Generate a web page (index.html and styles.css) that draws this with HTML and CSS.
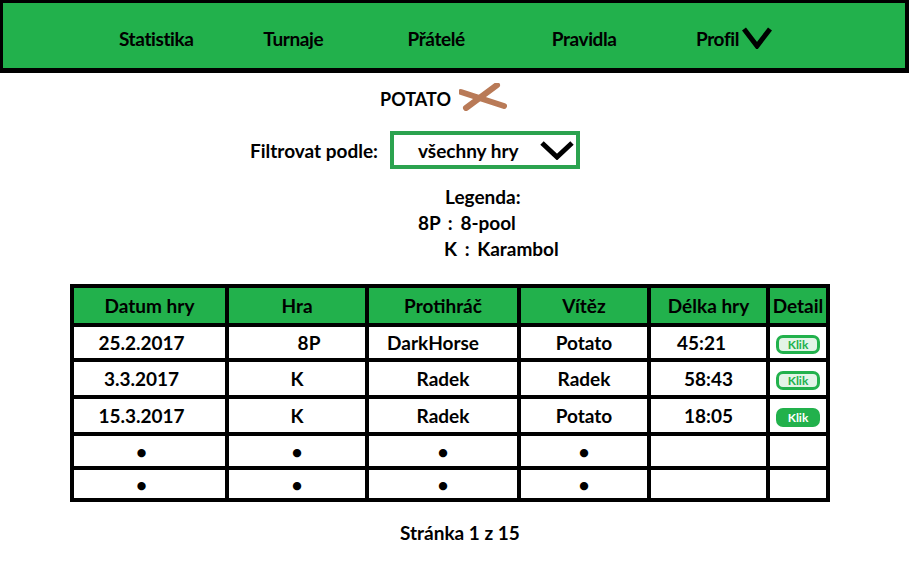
FILE: index.html
```html
<!DOCTYPE html>
<html lang="cs">
<head>
<meta charset="utf-8">
<title>Statistika</title>
<link rel="stylesheet" href="styles.css">
</head>
<body>
<header class="topbar">
  <nav class="nav">
    <a class="nav-item">Statistika</a>
    <a class="nav-item">Turnaje</a>
    <a class="nav-item">Přátelé</a>
    <a class="nav-item">Pravidla</a>
    <a class="nav-item nav-profile">Profil
      <svg class="chev-nav" width="30" height="22" viewBox="0 0 30 22"><polyline points="2,2 15,19 28,2" fill="none" stroke="#000" stroke-width="5" stroke-linejoin="miter"/></svg>
    </a>
  </nav>
</header>

<main class="content">
  <div class="player">
    <span class="player-name">POTATO</span>
    <svg class="remove" width="48" height="28" viewBox="0 0 48 28"><line x1="2" y1="9" x2="45" y2="23" stroke="#b97a57" stroke-width="6" stroke-linecap="round"/><line x1="7" y1="25" x2="38" y2="2" stroke="#b97a57" stroke-width="6" stroke-linecap="round"/></svg>
  </div>

  <div class="filter">
    <span class="filter-label">Filtrovat podle:</span>
    <div class="select">
      <span class="select-text">všechny hry</span>
      <svg class="chev-select" width="34" height="20" viewBox="0 0 34 20"><polyline points="2,3 17,17 32,3" fill="none" stroke="#000" stroke-width="5"/></svg>
    </div>
  </div>

  <div class="legend">
    <div class="legend-title">Legenda:</div>
    <div class="legend-line l1">8P : 8-pool</div>
    <div class="legend-line l2">K : Karambol</div>
  </div>

  <table class="games">
    <thead>
      <tr class="r-head">
        <th class="c1">Datum hry</th>
        <th class="c2">Hra</th>
        <th class="c3">Protihráč</th>
        <th class="c4">Vítěz</th>
        <th class="c5">Délka hry</th>
        <th class="c6">Detail</th>
      </tr>
    </thead>
    <tbody>
      <tr class="r1">
        <td class="d1">25.2.2017</td><td class="d2">8P</td><td class="d3">DarkHorse</td><td>Potato</td><td class="d5">45:21</td>
        <td><span class="klik">Klik</span></td>
      </tr>
      <tr class="r2">
        <td class="d1">3.3.2017</td><td>K</td><td>Radek</td><td>Radek</td><td>58:43</td>
        <td><span class="klik">Klik</span></td>
      </tr>
      <tr class="r3">
        <td class="d1">15.3.2017</td><td>K</td><td>Radek</td><td>Potato</td><td>18:05</td>
        <td><span class="klik klik-filled">Klik</span></td>
      </tr>
      <tr class="r4">
        <td class="d1">•</td><td>•</td><td>•</td><td>•</td><td></td><td></td>
      </tr>
      <tr class="r5">
        <td class="d1">•</td><td>•</td><td>•</td><td>•</td><td></td><td></td>
      </tr>
    </tbody>
  </table>

  <div class="pager">Stránka 1 z 15</div>
</main>
</body>
</html>
```

FILE: styles.css
```css
* { box-sizing: border-box; }

body {
  margin: 0;
  background: #fff;
  color: #000;
  font-family: Lato, "Open Sans", Arial, sans-serif;
  font-weight: 700;
}

.topbar {
  height: 73px;
  background: #22b14c;
  border-style: solid;
  border-color: #000;
  border-width: 3px 4px 5px 3px;
}

.nav {
  display: grid;
  grid-template-columns: repeat(5, 144.25px);
  align-items: center;
  height: 100%;
  padding: 6px 0 0 116px;
}

.nav-item {
  display: flex;
  align-items: center;
  font-size: 19px;
  letter-spacing: -0.4px;
  color: #000;
}

.chev-nav { margin-left: 3px; margin-top: -2px; }

.content { display: flex; flex-direction: column; }

.player {
  display: flex;
  align-items: center;
  height: 26px;
  margin-top: 13px;
  padding-left: 380px;
}
.player-name { font-size: 18px; }
.remove { margin-left: 8px; margin-top: -4px; }

.filter {
  display: flex;
  align-items: center;
  margin-top: 19px;
  padding-left: 250px;
}
.filter-label { font-size: 19px; width: 140px; }
.select {
  display: flex;
  align-items: center;
  width: 190px;
  height: 38px;
  border: 4px solid #2ba34f;
  padding-left: 24px;
}
.select-text { font-size: 19px; width: 122px; }

.legend {
  margin-top: 15px;
  padding-left: 418px;
  font-size: 19px;
}
.legend-title, .legend-line { height: 26px; line-height: 26px; }
.legend-line { word-spacing: 3px; }
.legend-title { padding-left: 27px; }
.l2 { padding-left: 26px; }

.games {
  margin: 22px 0 0 70px;
  border-collapse: separate;
  border-spacing: 0;
  table-layout: fixed;
  width: 760px;
  border-top: 4px solid #000;
  border-left: 4px solid #000;
}
.games th, .games td {
  border-right: 4px solid #000;
  border-bottom: 4px solid #000;
  text-align: center;
  vertical-align: middle;
  padding: 0;
  font-size: 19px;
}
.games th { background: #22b14c; font-weight: 700; }
.games td.d1 { padding-right: 16px; }
.games td.d2 { padding-left: 24px; }
.games td.d3 { padding-right: 20px; }
.games td.d5 { padding-right: 14px; }
.c1 { width: 155px; }
.c2 { width: 140px; }
.c3 { width: 152px; }
.c4 { width: 130px; }
.c5 { width: 119px; }
.c6 { width: 60px; }

.r-head th { height: 39px; }
.r1 td { height: 35px; }
.r2 td { height: 37px; }
.r3 td { height: 37px; }
.r4 td { height: 34px; }
.r5 td { height: 32px; }

.klik {
  display: inline-block;
  width: 44px;
  height: 19px;
  line-height: 13px;
  border: 3px solid #22b14c;
  border-radius: 7px;
  font-size: 12px;
  color: #22b14c;
  background: #e3f4e7;
  vertical-align: middle;
}
.klik-filled { background: #22b14c; color: #fff; }

.pager {
  margin-top: 19px;
  height: 24px;
  line-height: 24px;
  padding-left: 400px;
  font-size: 19px;
}
```
